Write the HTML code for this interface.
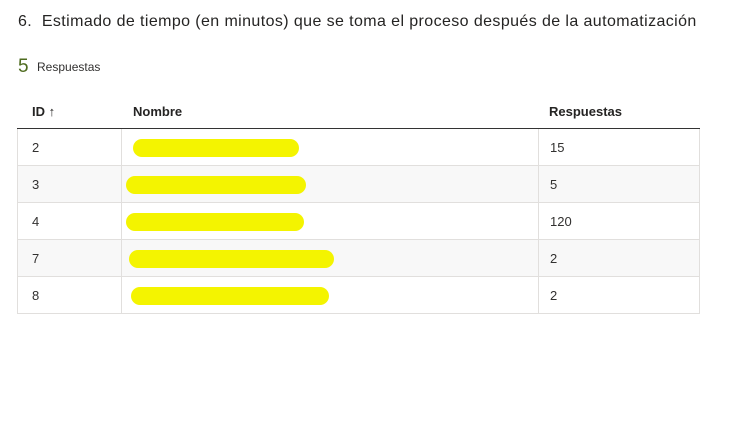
<!DOCTYPE html>
<html><head><style>
body{margin:0;width:738px;height:421px;background:#fff;font-family:"Liberation Sans",sans-serif;color:#323130;position:relative;overflow:hidden}
.t{position:absolute;left:18px;top:13px;font-size:16px;color:#252423;letter-spacing:0.4px}
.n{position:absolute;left:18px;top:56px;font-size:19px;color:#4e6b1f}
.r{position:absolute;left:37px;top:60px;font-size:12px;color:#323130}
.h{position:absolute;top:104px;font-size:13px;font-weight:bold;color:#252423}
.line{position:absolute;left:17px;width:683px;top:128px;height:1px;background:#333}
.row{position:absolute;left:17px;width:681px;height:36px;border:1px solid #e1dfdd;border-top:none;font-size:13px}
.row.g{background:#f8f8f8}
.row span{position:absolute;top:11px}
.v1{position:absolute;left:103px;top:0;bottom:0;width:1px;background:#e1dfdd}
.v2{position:absolute;left:520px;top:0;bottom:0;width:1px;background:#e1dfdd}
.y{position:absolute;height:18px;top:10px;background:#f4f400;border-radius:9px}
</style></head><body>
<div class="t">6.&nbsp; Estimado de tiempo (en minutos) que se toma el proceso después de la automatización</div>
<div class="n">5</div><div class="r">Respuestas</div>
<div class="h" style="left:32px">ID <span style="font-weight:normal">↑</span></div>
<div class="h" style="left:133px">Nombre</div>
<div class="h" style="left:549px">Respuestas</div>
<div class="line"></div>
<div class="row" style="top:129px"><div class="v1"></div><div class="v2"></div><span style="left:14px">2</span><div class="y" style="left:115px;width:166px"></div><span style="left:532px">15</span></div>
<div class="row g" style="top:166px"><div class="v1"></div><div class="v2"></div><span style="left:14px">3</span><div class="y" style="left:108px;width:180px"></div><span style="left:532px">5</span></div>
<div class="row" style="top:203px"><div class="v1"></div><div class="v2"></div><span style="left:14px">4</span><div class="y" style="left:108px;width:178px"></div><span style="left:532px">120</span></div>
<div class="row g" style="top:240px"><div class="v1"></div><div class="v2"></div><span style="left:14px">7</span><div class="y" style="left:111px;width:205px"></div><span style="left:532px">2</span></div>
<div class="row" style="top:277px"><div class="v1"></div><div class="v2"></div><span style="left:14px">8</span><div class="y" style="left:113px;width:198px"></div><span style="left:532px">2</span></div>
</body></html>
